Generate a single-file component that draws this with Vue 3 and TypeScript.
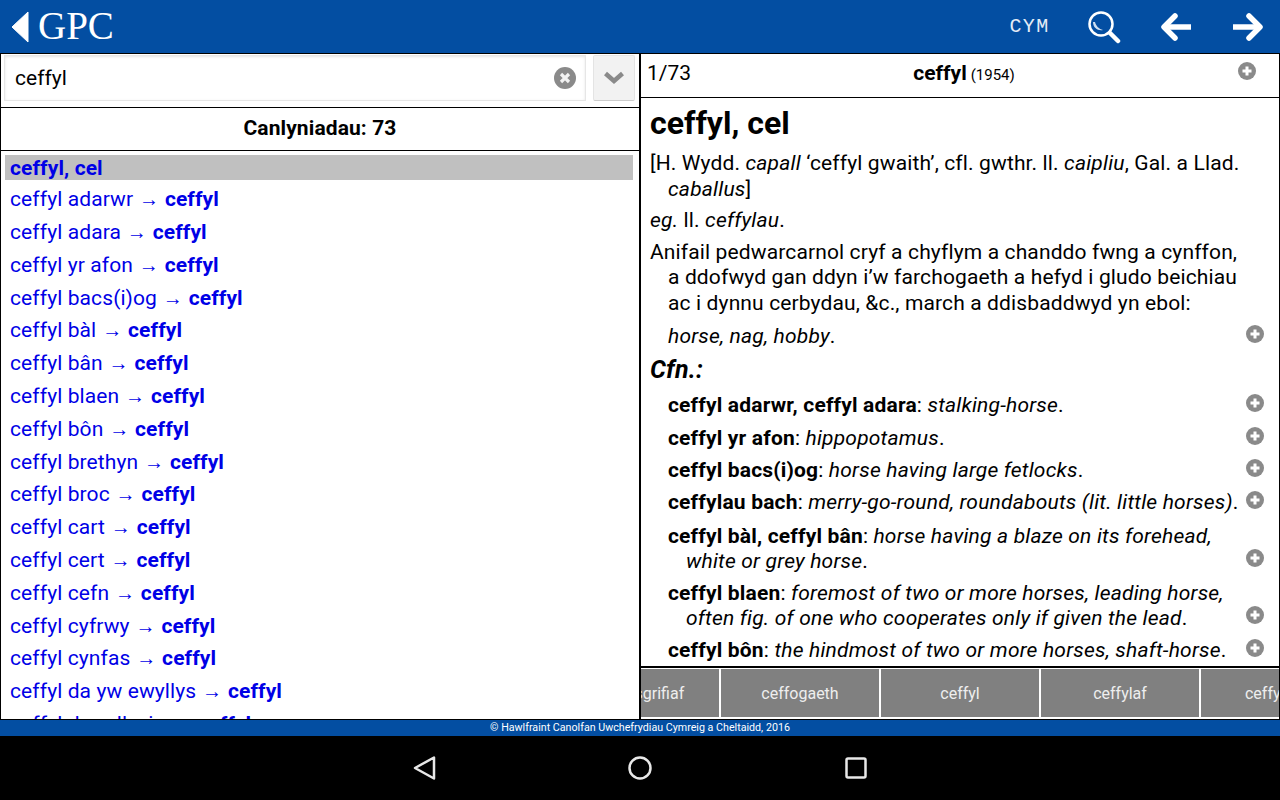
<script setup lang="ts">
const terms: [string, string][] = [
  ['ceffyl adarwr', 'ceffyl'], ['ceffyl adara', 'ceffyl'], ['ceffyl yr afon', 'ceffyl'],
  ['ceffyl bacs(i)og', 'ceffyl'], ['ceffyl bàl', 'ceffyl'], ['ceffyl bân', 'ceffyl'],
  ['ceffyl blaen', 'ceffyl'], ['ceffyl bôn', 'ceffyl'], ['ceffyl brethyn', 'ceffyl'],
  ['ceffyl broc', 'ceffyl'], ['ceffyl cart', 'ceffyl'], ['ceffyl cert', 'ceffyl'],
  ['ceffyl cefn', 'ceffyl'], ['ceffyl cyfrwy', 'ceffyl'], ['ceffyl cynfas', 'ceffyl'],
  ['ceffyl da yw ewyllys', 'ceffyl'], ['ceffyl dewyllysio', 'ceffyl']
]
const tabs = ['cefnysgrifiaf', 'ceffogaeth', 'ceffyl', 'ceffylaf', 'ceffylaidd']
const senses: { cls: string; b: string; i: string; more?: string }[] = [
  { cls: 's1', b: 'ceffyl adarwr, ceffyl adara', i: 'stalking-horse' },
  { cls: 's2', b: 'ceffyl yr afon', i: 'hippopotamus' },
  { cls: 's3', b: 'ceffyl bacs(i)og', i: 'horse having large fetlocks' },
  { cls: 's4', b: 'ceffylau bach', i: 'merry-go-round, roundabouts (lit. little horses)' },
  { cls: 's5', b: 'ceffyl bàl, ceffyl bân', i: 'horse having a blaze on its forehead,', more: 'white or grey horse' },
  { cls: 's6', b: 'ceffyl blaen', i: 'foremost of two or more horses, leading horse,', more: 'often fig. of one who cooperates only if given the lead' },
  { cls: 's7', b: 'ceffyl bôn', i: 'the hindmost of two or more horses, shaft-horse' }
]
</script>

<template>
  <div class="app">
    <header class="top">
      <div class="brand">
        <svg width="18" height="32" viewBox="0 0 18 32"><path d="M17 1V31L1 16Z" fill="#fff" stroke="#fff" stroke-linejoin="round"/></svg>
        <span class="logo">GPC</span>
      </div>
      <div class="actions">
        <span class="lang">CYM</span>
        <svg width="34" height="34" viewBox="0 0 34 34" fill="none" stroke="#fff"><circle cx="14" cy="14" r="11.500" stroke-width="2.500"/><path d="M6 12c0 6 5 9 10 8-4-1-7-4-8-8z" fill="#cfe0f2" stroke="none"/><path d="M23 23l8 8" stroke-width="4.500" stroke-linecap="round"/></svg>
        <svg width="34" height="30" viewBox="0 0 34 30" fill="none" stroke="#fff" stroke-width="5.500"><path d="M32 15H5" /><path d="M16 4L5 15l11 11" stroke-linecap="round" stroke-linejoin="round"/></svg>
        <svg width="34" height="30" viewBox="0 0 34 30" fill="none" stroke="#fff" stroke-width="5.500"><path d="M2 15h27" /><path d="M18 4l11 11-11 11" stroke-linecap="round" stroke-linejoin="round"/></svg>
      </div>
    </header>

    <main class="panes">
      <section class="left">
        <div class="search">
          <div class="field">
            <span>ceffyl</span>
            <svg width="22" height="22" viewBox="0 0 22 22"><circle cx="11" cy="11" r="11" fill="#8a8a8a"/><path d="M7 7l8 8M15 7l-8 8" stroke="#f2f2f2" stroke-width="3.200"/></svg>
          </div>
          <button class="drop" type="button" aria-label="Dewis">
            <svg width="22" height="14" viewBox="0 0 22 14" fill="none"><path d="M2.500 2.500L11 10l8.500-7.500" stroke="#8a8a8a" stroke-width="4.500"/></svg>
          </button>
        </div>
        <div class="count"><span>Canlyniadau: 73</span></div>
        <div class="list">
          <div class="current">ceffyl, cel</div>
          <div v-for="(t, i) in terms" :key="i" class="item">{{ t[0] }} <span class="arrow">→</span> <b>{{ t[1] }}</b></div>
        </div>
      </section>

      <section class="right">
        <div class="rhead">
          <span class="pos">1/73</span>
          <span class="headword"><b>ceffyl</b> <small>(1954)</small></span>
          <svg class="plus head-plus" viewBox="0 0 18 18"><circle cx="9" cy="9" r="9" fill="#8a8a8a"/><path d="M9 4.500v9M4.500 9h9" stroke="#fff" stroke-width="3"/></svg>
        </div>
        <article class="entry">
          <h1>ceffyl, cel</h1>
          <p class="hang e1">[H. Wydd. <i>capall</i> ‘ceffyl gwaith’, cfl. gwthr. ll. <i>caipliu</i>, Gal. a Llad.</p>
          <p class="cont"><i>caballus</i>]</p>
          <p class="e2"><i>eg.</i> ll. <i>ceffylau</i>.</p>
          <p class="hang e3">Anifail pedwarcarnol cryf a chyflym a chanddo fwng a cynffon, a ddofwyd gan ddyn i’w farchogaeth a hefyd i gludo beichiau ac i dynnu cerbydau, &amp;c., march a ddisbaddwyd yn ebol:</p>
          <div class="sense e4"><span><i>horse, nag, hobby</i>.</span><svg class="plus" viewBox="0 0 18 18"><circle cx="9" cy="9" r="9" fill="#8a8a8a"/><path d="M9 4.500v9M4.500 9h9" stroke="#fff" stroke-width="3"/></svg></div>
          <h2><i>Cfn.:</i></h2>
          <div v-for="s in senses" :key="s.cls" class="sense" :class="[s.cls, { multi: s.more }]">
            <div>
              <div><b>{{ s.b }}</b>: <i>{{ s.i }}</i><template v-if="!s.more">.</template></div>
              <div v-if="s.more" class="more"><i>{{ s.more }}</i>.</div>
            </div>
            <svg class="plus" viewBox="0 0 18 18"><circle cx="9" cy="9" r="9" fill="#8a8a8a"/><path d="M9 4.500v9M4.500 9h9" stroke="#fff" stroke-width="3"/></svg>
          </div>
        </article>
        <nav class="tabs">
          <div v-for="(t, i) in tabs" :key="i" class="tab"><span>{{ t }}</span></div>
        </nav>
      </section>
    </main>

    <footer class="copy">© Hawlfraint Canolfan Uwchefrydiau Cymreig a Cheltaidd, 2016</footer>

    <div class="sysnav">
      <svg class="back" width="26" height="26" viewBox="0 0 26 26" fill="none" stroke="#e8e8e8" stroke-width="2.500"><path d="M22 2.500V23.500L3 13Z" stroke-linejoin="round"/></svg>
      <svg width="26" height="26" viewBox="0 0 26 26" fill="none" stroke="#e8e8e8" stroke-width="2.500"><circle cx="13" cy="13" r="10.500"/></svg>
      <svg width="26" height="26" viewBox="0 0 26 26" fill="none" stroke="#e8e8e8" stroke-width="2.500"><rect x="3.500" y="3.500" width="19" height="19" rx="1.500"/></svg>
    </div>
  </div>
</template>

<style>
html, body { margin: 0; background: #000; }
</style>

<style scoped>
.app { width: 1280px; height: 800px; display: flex; flex-direction: column; overflow: hidden; font-family: Roboto, "Liberation Sans", sans-serif; color: #000; background: #fff; }
.top { height: 53px; flex: none; background: #034ea2; display: flex; align-items: center; justify-content: space-between; color: #fff; }
.brand { display: flex; align-items: center; gap: 9px; padding-left: 11px; }
.logo { font-family: "Liberation Serif", serif; font-size: 39px; line-height: 53px; position: relative; top: -1px; }
.actions { display: flex; align-items: center; padding-right: 15px; }
.lang { font-family: "Liberation Mono", monospace; font-size: 20px; letter-spacing: 1.300px; width: 41px; margin-right: 37px; text-align: center; white-space: nowrap; color: #e4ecf6; }
.actions svg:nth-of-type(2) { margin-left: 38px; }
.actions svg:nth-of-type(3) { margin-left: 38px; }
.panes { flex: none; height: 667px; display: flex; border-top: 1px solid #000; border-bottom: 1px solid #000; box-sizing: border-box; }
.left { width: 638px; flex: none; border-left: 1px solid #000; border-right: 2px solid #000; display: flex; flex-direction: column; }
.search { height: 54px; flex: none; box-sizing: border-box; border-bottom: 1px solid #000; display: flex; padding: 1px 3px 6px 3px; gap: 7px; }
.field { width: 582px; box-sizing: border-box; border: 1px solid #e6e6e6; box-shadow: inset 0 1px 3px #e4e4e4; display: flex; align-items: center; justify-content: space-between; padding: 0 9px 0 10px; font-size: 21px; }
.drop { width: 42px; padding: 0; border: 1px solid #e4e4e4; border-bottom-color: #ccc; background: #f2f2f2; border-radius: 2px; display: flex; align-items: center; justify-content: center; }
.count { height: 43px; flex: none; box-sizing: border-box; border-bottom: 1px solid #000; display: flex; align-items: center; justify-content: center; padding-bottom: 2px; font-size: 21px; letter-spacing: .1px; font-weight: 700; }
.list { flex: 1; overflow: hidden; padding: 4px 6px 0 4px; color: #0000e6; font-size: 21px; letter-spacing: .1px; }
.current { height: 25px; line-height: 27px; background: #c0c0c0; padding-left: 5px; font-weight: 700; margin-bottom: 3.200px; }
.item { height: 32.800px; line-height: 33px; padding-left: 5px; white-space: nowrap; }
.arrow { margin: 0 .5px; font-size: 20px; }
.right { flex: 1; border-right: 1px solid #000; display: flex; flex-direction: column; min-width: 0; overflow: hidden; }
.rhead { height: 44px; flex: none; box-sizing: border-box; border-bottom: 1px solid #000; position: relative; display: flex; align-items: center; justify-content: center; }
.pos { position: absolute; left: 6px; top: 7px; font-size: 21px; }
.headword { position: relative; top: -3px; left: 4px; }
.headword b { font-size: 21px; }
.headword small { font-size: 15px; }
.head-plus { position: absolute; right: 23px; top: 8px; }
.plus { width: 18px; height: 18px; flex: none; margin-bottom: 5px; }
.entry { flex: 1; min-height: 0; overflow: hidden; padding: 0 32px 0 9px; font-size: 21px; line-height: 25.500px; letter-spacing: .13px; }
.entry i { letter-spacing: .2px; }
.entry b { letter-spacing: .17px; }
.entry h1 { margin: 6px 0 0; font-size: 32px; line-height: 38px; letter-spacing: 0; }
.entry p { margin: 0; }
.hang { padding-left: 18px; text-indent: -18px; }
.cont { padding-left: 18px; }
.e1 { margin-top: 9px !important; }
.e2 { margin-top: 6px !important; }
.e3 { margin-top: 6px !important; }
.sense { display: flex; justify-content: space-between; align-items: center; padding-left: 18px; margin-right: -17px; white-space: nowrap; }
.e4 { margin-top: 8px; }
.entry h2 { margin: 3px 0 0; font-size: 25px; line-height: 34px; letter-spacing: 0; }
.s1 { margin-top: 6px; } .s2 { margin-top: 8px; } .s3 { margin-top: 6px; } .s4 { margin-top: 7px; }
.s5 { margin-top: 8px; }
.s6 { margin-top: 6px; }
.s7 { margin-top: 6.500px; }
.multi { align-items: flex-end; }
.multi .plus { margin-bottom: 8px; }
.more { padding-left: 18px; }
.tabs { height: 53px; flex: none; box-sizing: border-box; border-top: 2px solid #000; display: flex; gap: 2px; padding: 1px 0 2px; margin-left: -80px; background: #fff; }
.tab { width: 158px; flex: none; background: #808080; color: #eee; font-size: 16px; display: flex; align-items: center; justify-content: center; white-space: nowrap; }
.copy { height: 16px; flex: none; background: #034ea2; color: #fff; font-size: 10.700px; line-height: 16px; text-align: center; }
.sysnav { flex: 1; background: #000; display: flex; justify-content: center; align-items: center; gap: 190px; }
.back { position: relative; left: 1px; }
</style>
